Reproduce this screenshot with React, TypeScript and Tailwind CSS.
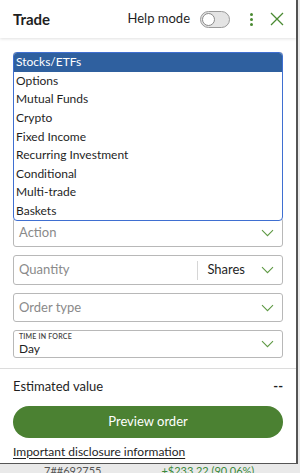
import { useState } from "react";

const tradeTypes = [
  "Stocks/ETFs",
  "Options",
  "Mutual Funds",
  "Crypto",
  "Fixed Income",
  "Recurring Investment",
  "Conditional",
  "Multi-trade",
  "Baskets",
];

function Chevron() {
  return (
    <svg width="13" height="8" viewBox="0 0 13 8" fill="none" className="shrink-0">
      <path d="M1 1.2l5.5 5.5 5.5-5.5" stroke="#5f9a45" strokeWidth="1.1" />
    </svg>
  );
}

function Field({ children, className = "" }: { children?: React.ReactNode; className?: string }) {
  return (
    <div
      className={`flex shrink-0 items-center rounded-[3px] border border-[#b8b8b8] bg-white pl-[5px] pr-[8px] ${className}`}
    >
      {children}
    </div>
  );
}

export default function App() {
  const [selected] = useState(0);

  return (
    <div className="h-[473px] w-[300px] overflow-hidden bg-[#e9e9e9] font-['Lato','Noto_Sans',sans-serif] text-[#1f1f1f]">
      <div className="flex h-[464px] w-[298px] flex-col border-r-2 border-b border-[#555] bg-white">
        <header className="flex h-[38px] shrink-0 items-center pl-[13px] pr-[12px] shadow-[0_1px_3px_rgba(0,0,0,0.12)]">
          <h1 className="text-[15px] font-bold">Trade</h1>
          <span className="ml-auto text-[13px]">Help mode</span>
          <button className="ml-[10px] flex h-[17px] w-[30px] items-center rounded-full border border-[#9a9a9a] bg-[#e4e4e4] px-[1px]">
            <span className="h-[13px] w-[13px] rounded-full border border-[#8a8a8a] bg-white" />
          </button>
          <span className="ml-[20px] flex flex-col gap-[2px]">
            <span className="h-[3px] w-[3px] rounded-full bg-[#4a8a32]" />
            <span className="h-[3px] w-[3px] rounded-full bg-[#4a8a32]" />
            <span className="h-[3px] w-[3px] rounded-full bg-[#4a8a32]" />
          </span>
          <svg width="14" height="14" viewBox="0 0 14 14" className="ml-[17px]">
            <path d="M1 1l12 12M13 1L1 13" stroke="#4a8a32" strokeWidth="1.3" />
          </svg>
        </header>

        <div className="flex shrink-0 flex-col gap-[8px] px-[13px] pt-[14px]">
          <div className="relative shrink-0">
            {/* fields behind the open trade-type menu */}
            <div className="flex h-[158px] flex-col gap-[8px]">
              <Field className="h-[29px]" />
              <Field className="h-[40px]" />
              <Field className="h-[29px]" />
              <Field className="h-[36px]" />
            </div>
            <ul className="absolute left-0 right-0 top-0 z-10 h-[169px] overflow-hidden rounded-[4px] border-[1.5px] border-[#3f6fd1] bg-white text-[12px]">
              {tradeTypes.map((t, i) => (
                <li
                  key={t}
                  className={`flex h-[18.6px] items-center pl-[2px] ${
                    i === selected ? "bg-[#2f609f] text-white" : "text-[#1f1f1f]"
                  }`}
                >
                  {t}
                </li>
              ))}
            </ul>
          </div>

          <Field className="h-[29px] justify-between text-[13px] text-[#8a8a8a]">
            <span>Action</span>
            <Chevron />
          </Field>

          <Field className="h-[30px] text-[13px]">
            <span className="flex-1 text-[#8a8a8a]">Quantity</span>
            <span className="h-[19px] w-px bg-[#d6d6d6]" />
            <span className="ml-[9px] mr-[16px]">Shares</span>
            <Chevron />
          </Field>

          <Field className="h-[29px] justify-between text-[13px] text-[#8a8a8a]">
            <span>Order type</span>
            <Chevron />
          </Field>

          <Field className="h-[28px] justify-between">
            <span className="flex flex-col leading-none">
              <span className="text-[7px] font-semibold tracking-[0.2px] text-[#444]">TIME IN FORCE</span>
              <span className="mt-[3px] text-[12px]">Day</span>
            </span>
            <Chevron />
          </Field>
        </div>

        <div className="mt-[10px] shrink-0 border-t border-[#dcdcdc] px-[13px]">
          <div className="flex items-center justify-between pt-[8px] text-[13px]">
            <span>Estimated value</span>
            <span className="font-bold">--</span>
          </div>
          <button className="mt-[9px] flex h-[32px] w-full items-center justify-center rounded-full bg-[#4b8132] text-[13px] text-white">
            Preview order
          </button>
          <a href="#" className="mt-[5px] block text-[12px] underline underline-offset-2">
            Important disclosure information
          </a>
        </div>
      </div>
      <div className="flex gap-[60px] pl-[44px] text-[11px] leading-[14px]">
        <span className="text-[#555]">7##692755</span>
        <span className="text-[#3b8a3b]">+$233.22 (90.06%)</span>
      </div>
    </div>
  );
}
